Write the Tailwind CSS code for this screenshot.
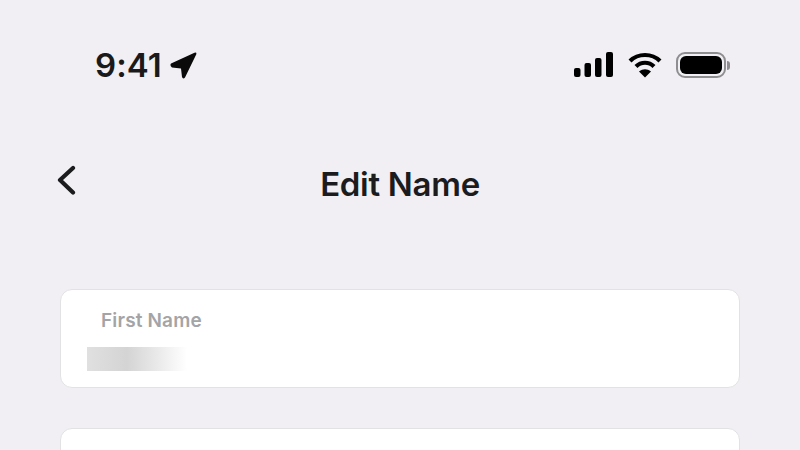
<!DOCTYPE html>
<html lang="en">
  <head>
    <meta charset="UTF-8" />
    <script src="https://cdn.jsdelivr.net/npm/@tailwindcss/browser@4"></script>
    <title>Edit Name</title>
  </head>
  <body>
    <main class="bg-[#f1eff3] h-[450px] w-[800px] overflow-hidden font-['Inter',sans-serif]">
      <div class="flex items-center justify-between h-[44px] mt-[43px] pl-[95px] pr-[70px]">
        <div class="flex items-center gap-[8px]">
          <span class="text-[33px] leading-[44px] font-semibold text-[#1a1a1a] tracking-[0.1px]">9:41</span>
          <svg width="27" height="27" viewBox="0 0 27 27" class="mt-[1px]">
            <path d="M1 11.500 L24.500 0.800 Q27 0 26.200 2.500 L15 25.500 Q13 27.500 12 25 L11 16.500 L2 15.500 Q-0.500 13.500 1 11.500 Z" fill="#0a0a0a" />
          </svg>
        </div>
        <div class="flex items-center gap-[14px]">
          <svg width="40" height="26" viewBox="0 0 40 26">
            <rect x="0" y="16" width="6.500" height="9" rx="2" fill="#000" />
            <rect x="10.500" y="11" width="6.500" height="14" rx="2" fill="#000" />
            <rect x="21" y="6" width="6.500" height="19" rx="2" fill="#000" />
            <rect x="32" y="0" width="7" height="25" rx="2" fill="#000" />
          </svg>
          <svg width="34" height="26" viewBox="0 0 34 26" fill="none" stroke="#000" stroke-width="4.200">
            <path d="M2 9 C10 1 24 1 32 9" />
            <path d="M8 14.500 C13 9.500 21 9.500 26 14.500" />
            <path d="M11 19.500 L17 25.500 L23 19.500 C19 16.500 15 16.500 11 19.500 Z" fill="#000" stroke="none" />
          </svg>
          <div class="flex items-center gap-[1px]">
            <div class="w-[50px] h-[26px] rounded-[9px] border-2 border-[#8e8e90] p-[2px]">
              <div class="w-full h-full rounded-[6px] bg-black"></div>
            </div>
            <div class="w-[3px] h-[9px] rounded-r-full bg-[#8e8e90]"></div>
          </div>
        </div>
      </div>
      <div class="relative flex items-center justify-center h-[44px] mt-[75px]">
        <svg class="absolute left-[55px] top-[3px]" width="22" height="30" viewBox="0 0 22 30" fill="none" stroke="#1c1c1e" stroke-width="4.200" stroke-linecap="round" stroke-linejoin="round">
          <path d="M18 3 L5 15 L18 27.500" />
        </svg>
        <h1 class="text-[33px] leading-[44px] font-semibold text-[#1c1c1e] tracking-[-0.3px]">Edit Name</h1>
      </div>
      <div class="flex flex-col gap-[40px] mx-[60px] mt-[83px]">
        <div class="h-[99px] bg-white border border-[#e2e2e4] rounded-[12px] pt-[19px] pl-[40px]">
          <p class="text-[19px] leading-[24px] font-semibold text-[#a4a4a6] tracking-[0.15px]">First Name</p>
          <div class="-ml-[14px] mt-[14px] w-[100px] h-[24px] bg-linear-to-r from-[#e0e0e0] via-[#d4d4d4] via-40% to-white"></div>
        </div>
        <div class="h-[99px] bg-white border border-[#e2e2e4] rounded-[12px]"></div>
      </div>
    </main>
  </body>
</html>
